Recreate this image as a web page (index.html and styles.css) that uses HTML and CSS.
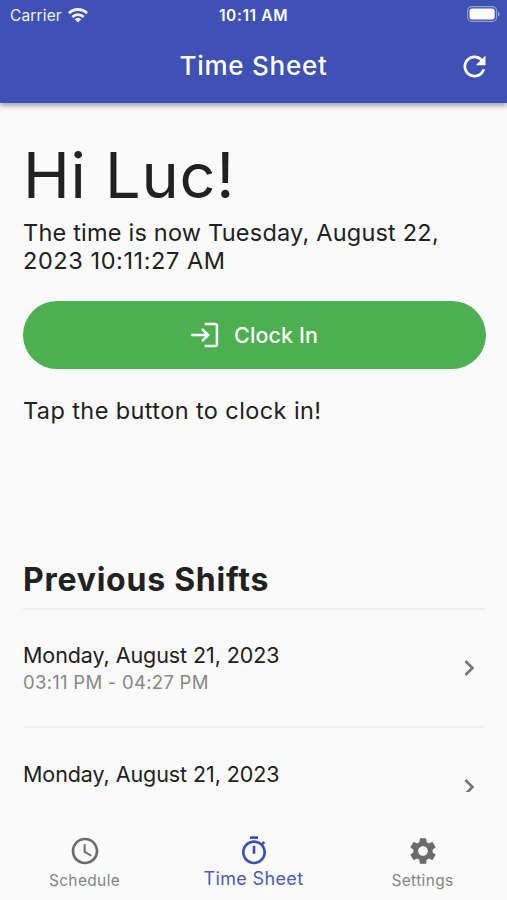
FILE: index.html
```html
<!DOCTYPE html>
<html lang="en">
<head>
<meta charset="utf-8">
<title>Time Sheet</title>
<link rel="stylesheet" href="styles.css">
</head>
<body>
<div class="app">
  <header class="header">
    <div class="status">
      <div class="status-left"><span class="carrier">Carrier</span>
        <svg class="wifi" viewBox="0 0 20 15"><g fill="none" stroke="#fff" stroke-width="2.8"><path d="M1 5.2a12.8 12.8 0 0 1 18 0"/><path d="M4.3 8.9a8.1 8.1 0 0 1 11.4 0"/></g><path fill="#fff" d="M6.7 11.2a4.8 4.8 0 0 1 6.6 0L10 14.6z"/></svg>
      </div>
      <span class="clock">10:11 AM</span>
      <svg class="battery" viewBox="0 0 33 16"><rect x=".6" y=".6" width="29" height="14.8" rx="4.4" fill="none" stroke="#fff" stroke-opacity=".45" stroke-width="1.1"/><rect x="2.5" y="2.5" width="25.2" height="11" rx="2.8" fill="#fff"/><path d="M31 5.5c2 .8 2 4.2 0 5z" fill="#fff" fill-opacity=".5"/></svg>
    </div>
    <div class="toolbar">
      <h1 class="title">Time Sheet</h1>
      <svg class="refresh" viewBox="0 0 24 24" fill="#fff"><path d="M17.65 6.35C16.2 4.9 14.21 4 12 4c-4.42 0-7.99 3.58-7.99 8s3.57 8 7.99 8c3.73 0 6.84-2.55 7.73-6h-2.08c-.82 2.33-3.04 4-5.65 4-3.31 0-6-2.69-6-6s2.69-6 6-6c1.66 0 3.14.69 4.22 1.78L13 11h7V4l-2.35 2.35z"/></svg>
    </div>
  </header>
  <main class="content">
    <h2 class="greeting">Hi Luc!</h2>
    <p class="body now">The time is now Tuesday, August 22,<br><span class="now-time">2023 10:11:27 AM</span></p>
    <button class="clock-in" type="button">
      <svg class="login" viewBox="0 0 24 24" fill="none" stroke="#fff" stroke-width="1.9"><path d="M11 3.8h8a1.2 1.2 0 0 1 1.2 1.2v14a1.2 1.2 0 0 1-1.2 1.2h-8"/><path d="M1 12h12.4M9 7.4l4.6 4.6L9 16.6"/></svg>
      <span>Clock In</span>
    </button>
    <p class="body hint">Tap the button to clock in!</p>
    <h3 class="section">Previous Shifts</h3>
    <ul class="shifts">
      <li class="shift">
        <div class="details"><p class="date">Monday, August 21, 2023</p><p class="hours">03:11 PM - 04:27 PM</p></div>
        <svg class="chevron" viewBox="0 0 24 24" fill="#757575"><path d="M10 6 8.59 7.41 13.17 12l-4.58 4.59L10 18l6-6z"/></svg>
      </li>
      <li class="shift">
        <div class="details"><p class="date">Monday, August 21, 2023</p></div>
        <svg class="chevron" viewBox="0 0 24 24" fill="#757575"><path d="M10 6 8.59 7.41 13.17 12l-4.58 4.59L10 18l6-6z"/></svg>
      </li>
    </ul>
  </main>
  <nav class="tabs">
    <a class="tab"><svg viewBox="0 0 24 24"><path d="M11.99 2C6.47 2 2 6.48 2 12s4.47 10 9.99 10C17.52 22 22 17.52 22 12S17.52 2 11.99 2zM12 20c-4.42 0-8-3.58-8-8s3.58-8 8-8 8 3.58 8 8-3.58 8-8 8zm.5-13H11v6l5.25 3.15.75-1.23-4.5-2.67z"/></svg><span>Schedule</span></a>
    <a class="tab active"><svg viewBox="0 0 24 24"><path d="M15 1H9v2h6V1zm-4 13h2V8h-2v6zm8.03-6.61 1.42-1.42c-.43-.51-.9-.99-1.41-1.41l-1.42 1.42C16.07 4.74 14.12 4 12 4c-4.97 0-9 4.03-9 9s4.02 9 9 9 9-4.03 9-9c0-2.12-.74-4.07-1.97-5.61zM12 20c-3.87 0-7-3.13-7-7s3.13-7 7-7 7 3.13 7 7-3.13 7-7 7z"/></svg><span>Time Sheet</span></a>
    <a class="tab"><svg viewBox="0 0 24 24"><path d="M19.14 12.94c.04-.3.06-.61.06-.94 0-.32-.02-.64-.07-.94l2.03-1.58c.18-.14.23-.41.12-.61l-1.92-3.32c-.12-.22-.37-.29-.59-.22l-2.39.96c-.5-.38-1.03-.7-1.62-.94l-.36-2.54c-.04-.24-.24-.41-.48-.41h-3.84c-.24 0-.43.17-.47.41l-.36 2.54c-.59.24-1.13.57-1.62.94l-2.39-.96c-.22-.08-.47 0-.59.22L2.74 8.87c-.12.21-.08.47.12.61l2.03 1.58c-.05.3-.09.63-.09.94s.02.64.07.94l-2.03 1.58c-.18.14-.23.41-.12.61l1.92 3.32c.12.22.37.29.59.22l2.39-.96c.5.38 1.03.7 1.62.94l.36 2.54c.05.24.24.41.48.41h3.84c.24 0 .44-.17.47-.41l.36-2.54c.59-.24 1.13-.56 1.62-.94l2.39.96c.22.08.47 0 .59-.22l1.92-3.32c.12-.22.07-.47-.12-.61l-2.01-1.58zM12 15.6c-1.98 0-3.6-1.62-3.6-3.6s1.62-3.6 3.6-3.6 3.6 1.62 3.6 3.6-1.62 3.6-3.6 3.6z"/></svg><span>Settings</span></a>
  </nav>
</div>
</body>
</html>
```
FILE: styles.css
```css
* { box-sizing: border-box; }
body { margin: 0; background: #fafafa; color: #212121; font-family: Inter, "Liberation Sans", sans-serif; }
h1, h2, h3, p, ul { margin: 0; padding: 0; font-weight: 400; }
.app { width: 507px; height: 900px; display: flex; flex-direction: column; overflow: hidden; }
.header { flex: none; height: 103px; background: #3f51b5; color: #fff; box-shadow: 0 3px 5px rgba(0,0,0,.34); z-index: 1; }
.status { height: 29px; display: grid; grid-template-columns: 1fr auto 1fr; align-items: center; padding: 1px 7px 0 10px; font-size: 15.5px; }
.status-left { display: flex; align-items: center; gap: 6px; opacity: .93; }
.carrier { letter-spacing: .15px; }
.wifi { width: 20px; height: 15px; }
.clock { font-weight: 600; letter-spacing: .6px; margin-left: -3px; }
.battery { width: 33px; height: 16px; justify-self: end; margin-top: -2px; }
.toolbar { height: 74px; display: grid; grid-template-columns: 49px 1fr 49px; align-items: center; }
.title { grid-column: 2; text-align: center; font-size: 26px; font-weight: 450; line-height: 32px; letter-spacing: .75px; }
.refresh { width: 33px; height: 33px; }
.content { flex: none; height: 689px; padding: 0 22px 0 23px; overflow: hidden; }
.greeting { padding-top: 32px; font-size: 63px; line-height: 80px; letter-spacing: .75px; }
.body { font-size: 23.5px; line-height: 28.5px; }
.now { margin-top: 3.5px; letter-spacing: .21px; }
.now-time { letter-spacing: .58px; }
.clock-in { margin-top: 25px; width: 463px; height: 68px; border: 0; border-radius: 34px; background: #4caf50; color: #fff; font: 450 21.5px Inter, sans-serif; letter-spacing: .1px; display: flex; align-items: center; justify-content: center; gap: 12px; padding: 0 8px 0 7px; }
.login { width: 32px; height: 32px; }
.hint { margin-top: 28px; letter-spacing: .4px; }
.section { margin-top: 133px; height: 51.5px; font-size: 32px; line-height: 43px; font-weight: 700; letter-spacing: .75px; border-bottom: 2px solid #eee; }
.shifts { list-style: none; }
.shift { height: 118.7px; display: flex; align-items: center; justify-content: space-between; border-bottom: 2px solid #f1f1f1; }
.details { height: 54px; }
.date { font-size: 21.5px; line-height: 28px; letter-spacing: -.08px; }
.hours { font-size: 18.5px; line-height: 26px; color: #888; letter-spacing: .27px; }
.chevron { width: 32px; height: 32px; }
.tabs { flex: none; height: 78px; margin-top: 30px; display: grid; grid-template-columns: repeat(3, 1fr); background: #fafafa; }
.tab { display: flex; flex-direction: column; align-items: center; padding-top: 12.5px; font-size: 15.5px; line-height: 20px; gap: 4px; color: #858585; letter-spacing: .35px; }
.tab svg { width: 32px; height: 32px; fill: #6b6b6b; }
.tab.active { color: #4a5bba; font-size: 18px; gap: 2px; }
.tab.active svg { fill: #3f51b5; }
```
